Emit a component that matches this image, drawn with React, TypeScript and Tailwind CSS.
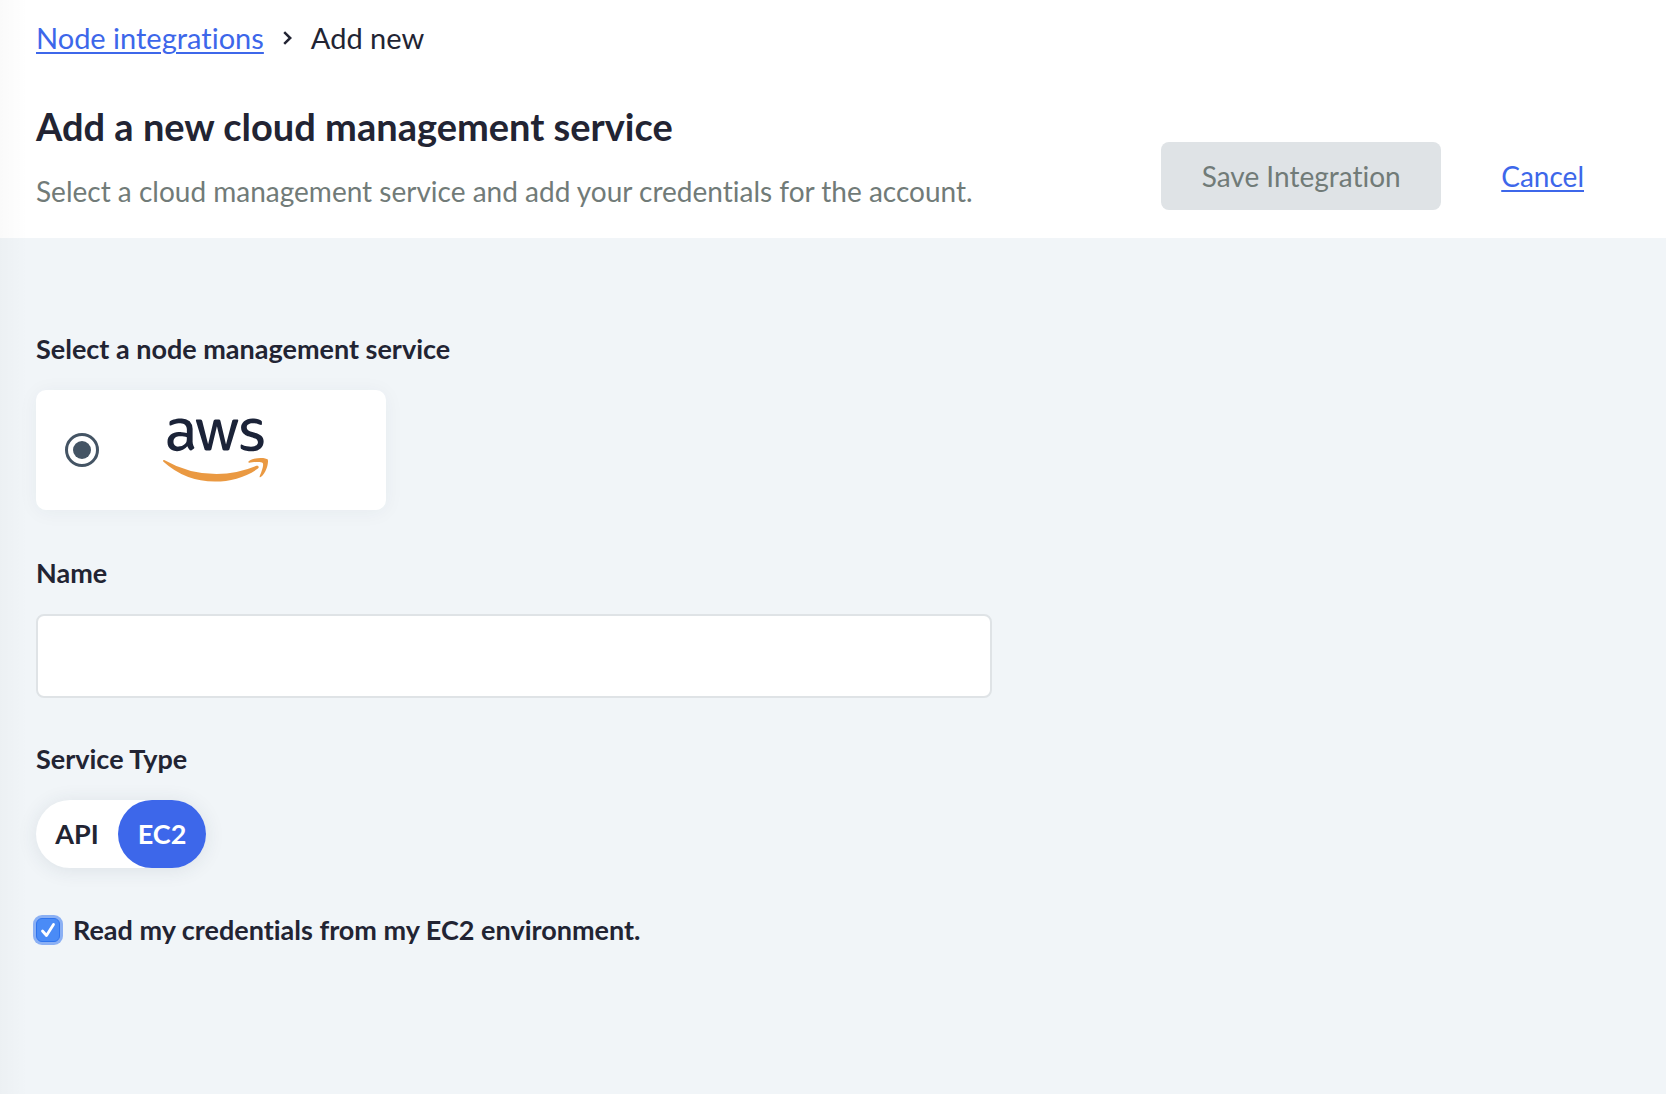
import { useState } from "react";
import { FaAws } from "react-icons/fa";

const SERVICE_TYPES = ["API", "EC2"];

function AwsLogo() {
  return (
    <>
      <svg className="absolute size-0" aria-hidden="true">
        <defs>
          <linearGradient id="aws-colors" x1="0" y1="0" x2="0" y2="1">
            <stop offset="0.57" stopColor="#1b2338" />
            <stop offset="0.57" stopColor="#ea9942" />
          </linearGradient>
        </defs>
      </svg>
      <FaAws className="h-[84px] w-[105px]" fill="url(#aws-colors)" stroke="none" aria-hidden="true" />
    </>
  );
}

function PageHeader() {
  return (
    <header className="bg-white px-9 pt-5 pb-7">
      <nav aria-label="Breadcrumb" className="flex items-center text-[29px] leading-9">
        <a href="#integrations" className="text-[#3d67ea] underline decoration-2 underline-offset-3">
          Node integrations
        </a>
        <svg className="mx-[19px] h-3.5 w-[9px]" viewBox="0 0 9 14" fill="none" aria-hidden="true">
          <path d="M1.2 1.2 L7.2 7 L1.2 12.8" stroke="#222433" strokeWidth="2.5" />
        </svg>
        <span aria-current="page">Add new</span>
      </nav>
      <div className="mt-[46px] flex items-end justify-between">
        <div>
          <h1 className="text-[38px] leading-[48px] font-bold">Add a new cloud management service</h1>
          <p className="mt-[22px] text-[28px] leading-[38px] text-[#717b78]">
            Select a cloud management service and add your credentials for the account.
          </p>
        </div>
        <div className="mr-[46px] flex items-center gap-[60px]">
          <button
            type="button"
            disabled
            className="h-[68px] w-[280px] rounded-lg bg-[#dfe3e6] text-[28px] text-[#717b78]"
          >
            Save Integration
          </button>
          <a href="#cancel" className="text-[28px] text-[#3d67ea] underline decoration-2 underline-offset-3">
            Cancel
          </a>
        </div>
      </div>
    </header>
  );
}

export default function App() {
  const [name, setName] = useState("");
  const [type, setType] = useState("EC2");
  const [fromEnv, setFromEnv] = useState(true);

  return (
    <div className="relative min-h-screen bg-[#f1f5f8] font-['Lato',sans-serif] text-[#222433] [font-variant-ligatures:none]">
      <PageHeader />
      <main className="px-9 pt-[93px] pb-12">
        <form onSubmit={(e) => e.preventDefault()}>
          <fieldset>
            <legend className="text-[27px] leading-9 font-bold">Select a node management service</legend>
            <label className="mt-[23px] flex h-[120px] w-[350px] items-center rounded-[10px] bg-white pl-[29px] shadow-[0_2px_20px_rgba(40,60,80,0.05)]">
              <input
                type="radio"
                name="service"
                defaultChecked
                aria-label="AWS"
                className="size-[34px] appearance-none rounded-full border-[3px] border-[#445464] bg-[#445464] bg-clip-content p-[5px]"
              />
              <span className="ml-16">
                <AwsLogo />
              </span>
            </label>
          </fieldset>

          <label htmlFor="name" className="mt-[45px] block text-[27px] leading-9 font-bold">
            Name
          </label>
          <input
            id="name"
            type="text"
            value={name}
            onChange={(e) => setName(e.target.value)}
            className="mt-[23px] block h-[84px] w-full max-w-[956px] rounded-lg border-2 border-[#dfe3e6] bg-white px-5 text-[27px] outline-none"
          />

          <fieldset className="mt-[43px]">
            <legend className="text-[27px] leading-9 font-bold">Service Type</legend>
            <div className="mt-[23px] inline-flex h-[68px] rounded-full bg-white shadow-[0_2px_20px_rgba(40,60,80,0.1)]">
              {SERVICE_TYPES.map((t) => (
                <button
                  key={t}
                  type="button"
                  aria-pressed={t === type}
                  onClick={() => setType(t)}
                  className={
                    t === type
                      ? "w-[88px] rounded-full bg-[#3d67ea] text-[27px] font-bold text-white"
                      : "w-[82px] rounded-full text-[27px] font-bold"
                  }
                >
                  {t}
                </button>
              ))}
            </div>
          </fieldset>

          <div className="mt-11 flex items-center gap-[13px]">
            <span className="relative flex size-6">
              <input
                id="from-env"
                type="checkbox"
                checked={fromEnv}
                onChange={(e) => setFromEnv(e.target.checked)}
                className="peer size-6 appearance-none rounded-md border border-[#2f74ee] bg-white ring-3 ring-[#8bb0f4] checked:bg-[#4a8bf6]"
              />
              <svg
                className="pointer-events-none absolute inset-0 hidden size-6 peer-checked:block"
                viewBox="0 0 24 24"
                fill="none"
                aria-hidden="true"
              >
                <path
                  d="M6.5 13 L10.5 17.5 L17.5 6.5"
                  stroke="#ffffff"
                  strokeWidth="2.8"
                  strokeLinecap="round"
                  strokeLinejoin="round"
                />
              </svg>
            </span>
            <label htmlFor="from-env" className="text-[27px] leading-9 font-bold">
              Read my credentials from my EC2 environment.
            </label>
          </div>
        </form>
      </main>
      <div className="pointer-events-none absolute inset-y-0 left-0 w-7 bg-linear-to-r from-black/2 to-transparent" />
    </div>
  );
}
